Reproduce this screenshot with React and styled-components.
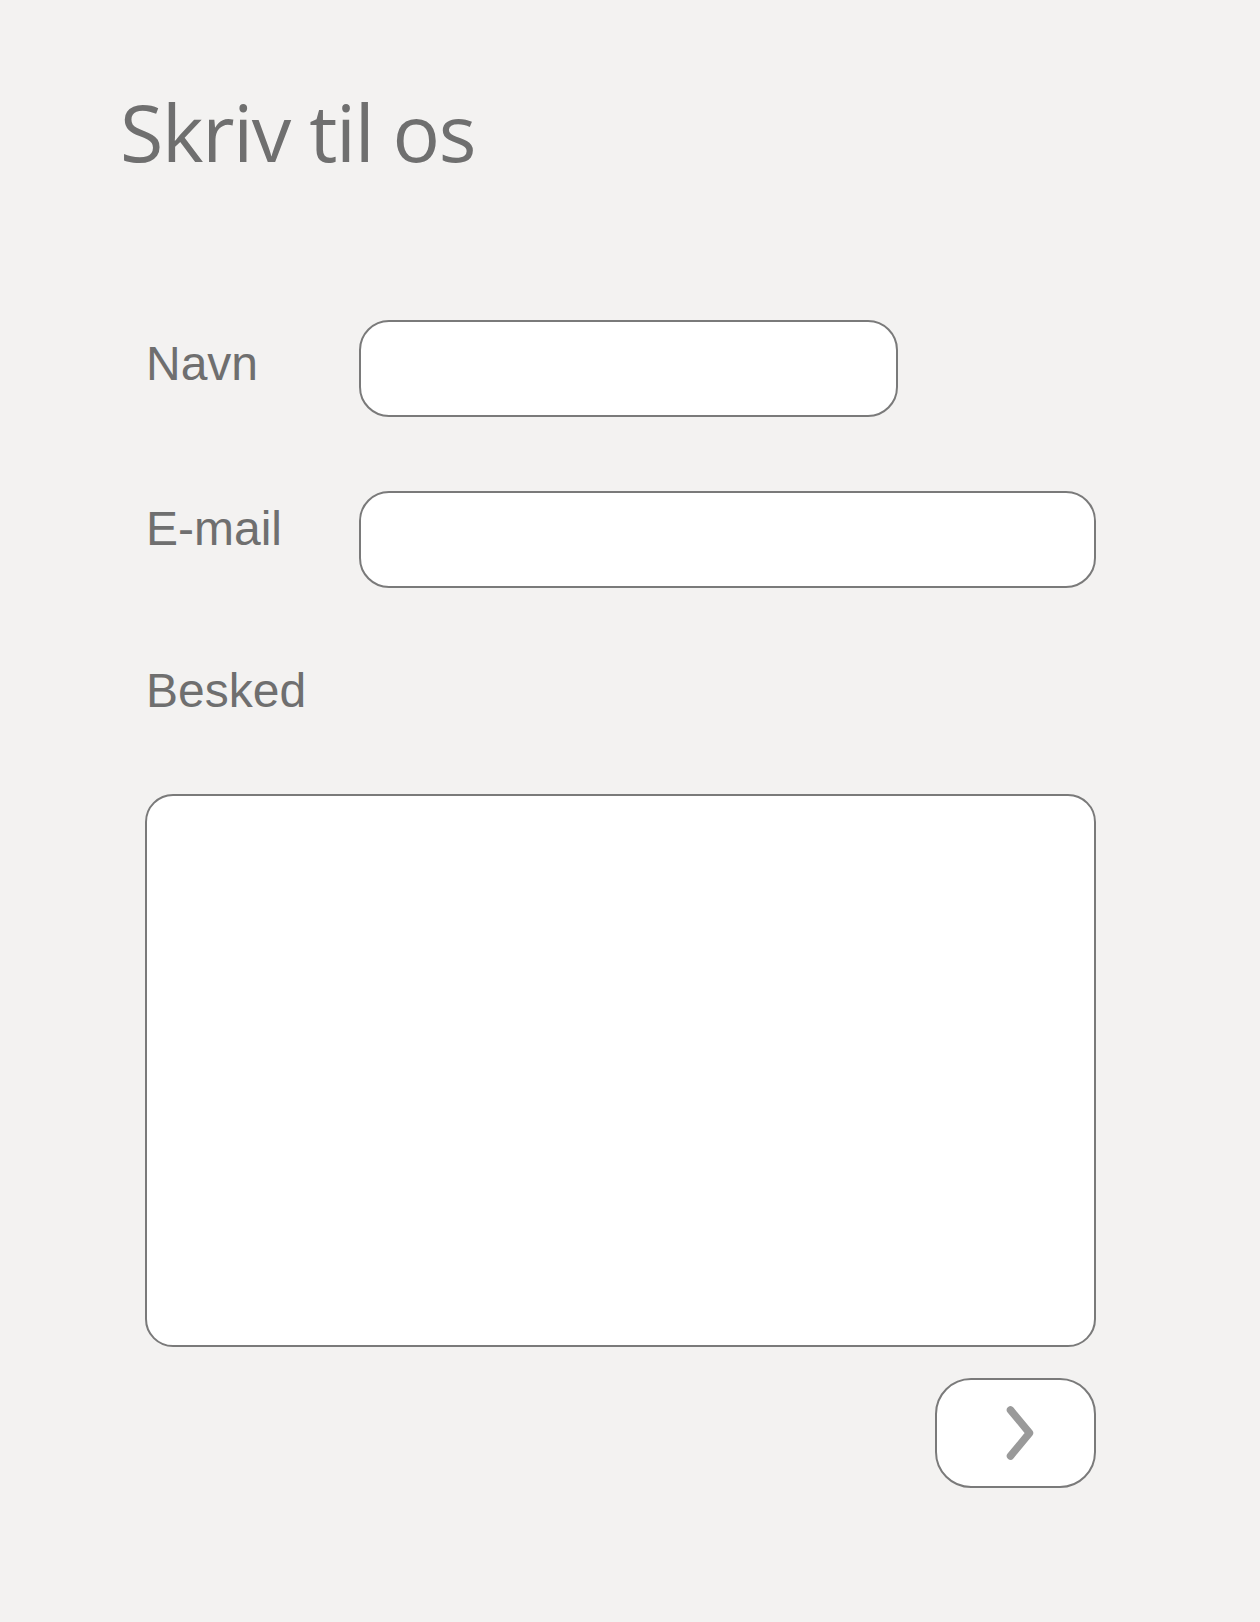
import React from "react";
import styled, { createGlobalStyle } from "styled-components";

const Global = createGlobalStyle`
  html, body { margin: 0; padding: 0; background: #f3f2f1; }
  * { box-sizing: border-box; }
`;

const Page = styled.div`
  min-height: 1622px;
  padding: 92px 0 0 120px;
  background: #f3f2f1;
`;

const Title = styled.h1`
  margin: 0;
  font-family: "Open Sans", "Noto Sans", sans-serif;
  font-weight: 400;
  font-size: 79px;
  line-height: 1;
  letter-spacing: -1.3px;
  color: #6f6f6f;
`;

const Form = styled.form`
  margin: 149px 0 0 25px;
  width: 951px;
  display: flex;
  flex-direction: column;
`;

const Row = styled.div`
  display: flex;
  align-items: flex-start;
  margin-bottom: ${(p) => p.$gap}px;
`;

const Label = styled.label`
  width: 214px;
  flex: none;
  margin-top: ${(p) => p.$offset || 0}px;
  padding-left: 1px;
  font-family: "Liberation Sans", Arial, sans-serif;
  font-size: 48px;
  line-height: 1;
  color: #6f6f6f;
`;

const Input = styled.input`
  width: ${(p) => p.$width}px;
  height: 97px;
  border: 2px solid #7a7a7a;
  border-radius: 30px;
  background: #fff;
  padding: 0 24px;
  font-family: "Liberation Sans", Arial, sans-serif;
  font-size: 32px;
  color: #555;
  outline: none;
`;

const TextArea = styled.textarea`
  width: 951px;
  height: 553px;
  margin-top: 79px;
  border: 2px solid #7a7a7a;
  border-radius: 28px;
  background: #fff;
  padding: 24px;
  resize: none;
  font-family: "Liberation Sans", Arial, sans-serif;
  font-size: 32px;
  outline: none;
  display: block;
`;

const Actions = styled.div`
  display: flex;
  justify-content: flex-end;
  margin-top: 31px;
`;

const SendButton = styled.button`
  width: 161px;
  height: 110px;
  border: 2px solid #7a7a7a;
  border-radius: 36px;
  background: #fff;
  padding: 0;
  display: flex;
  align-items: center;
  justify-content: center;
  cursor: pointer;
`;

export default function App() {
  return (
    <>
      <Global />
      <Page>
        <Title>Skriv til os</Title>
        <Form onSubmit={(e) => e.preventDefault()}>
          <Row $gap={74}>
            <Label htmlFor="navn" $offset={20}>Navn</Label>
            <Input id="navn" type="text" $width={539} />
          </Row>
          <Row $gap={79}>
            <Label htmlFor="email" $offset={14}>E-mail</Label>
            <Input id="email" type="email" $width={737} />
          </Row>
          <Label htmlFor="besked">Besked</Label>
          <TextArea id="besked" />
          <Actions>
            <SendButton type="submit" aria-label="Send">
              <svg width="40" height="58" viewBox="0 0 40 58">
                <polyline
                  points="14.5,6 33.5,29 14.5,52"
                  fill="none"
                  stroke="#9a9a9a"
                  strokeWidth="7.5"
                  strokeLinecap="round"
                  strokeLinejoin="round"
                />
              </svg>
            </SendButton>
          </Actions>
        </Form>
      </Page>
    </>
  );
}
